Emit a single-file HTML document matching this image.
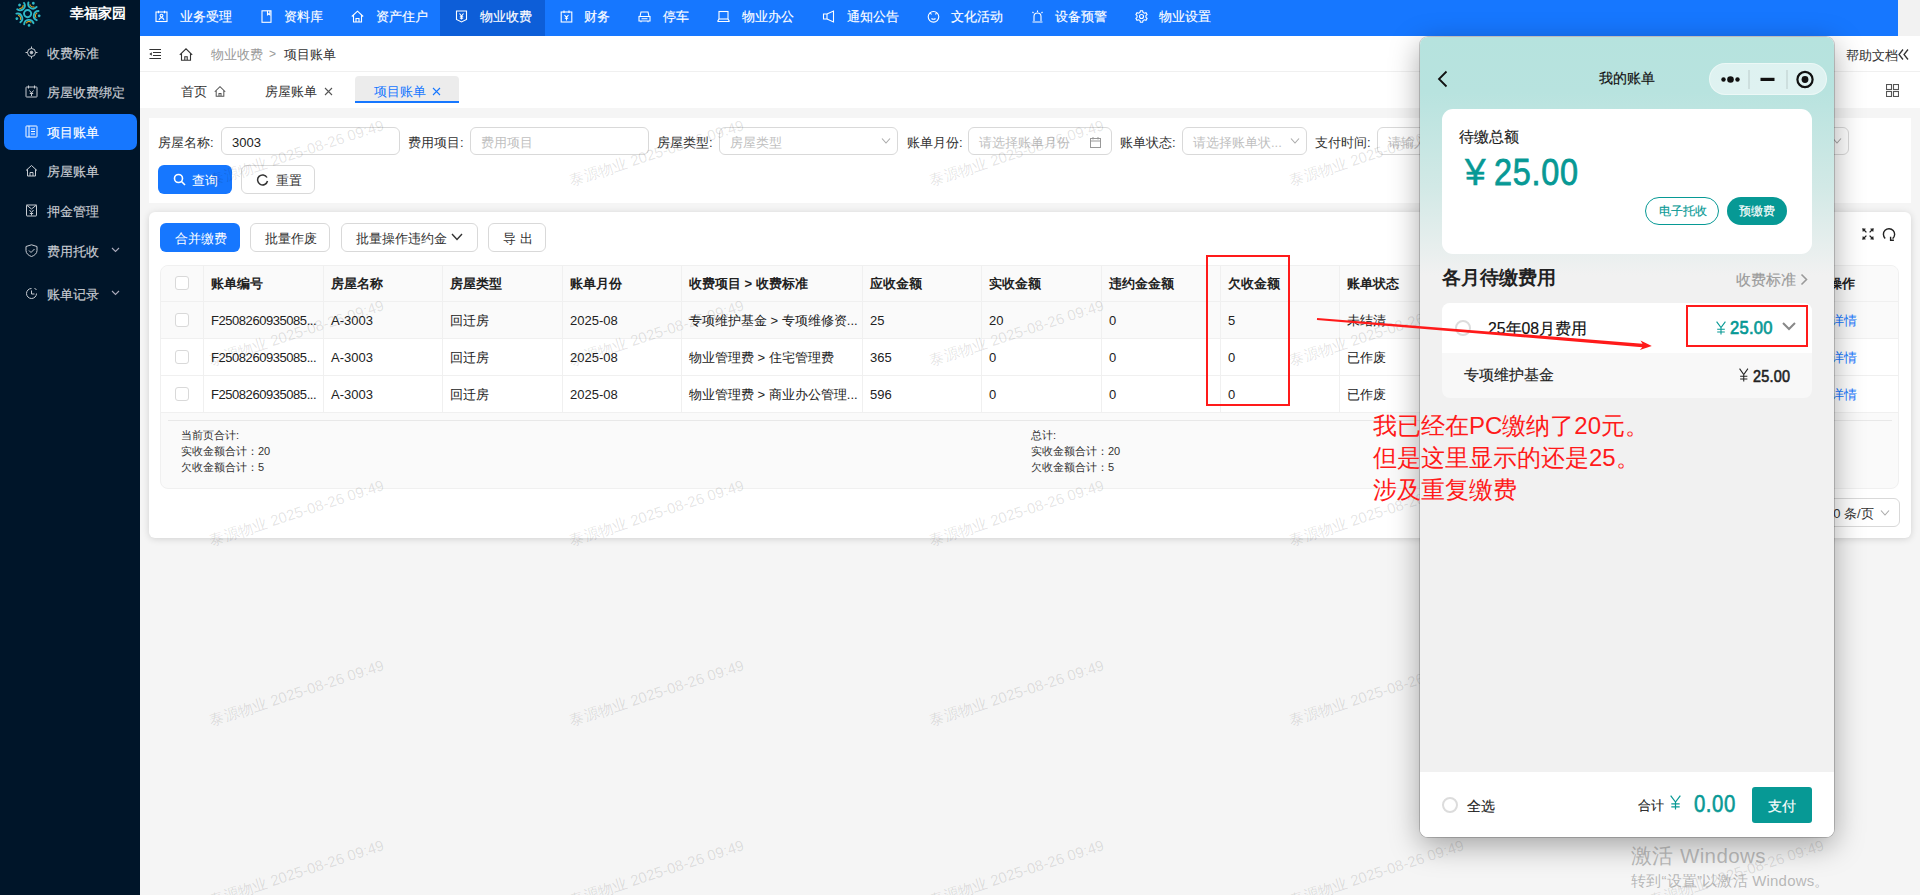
<!DOCTYPE html>
<html><head><meta charset="utf-8">
<style>
*{box-sizing:border-box;margin:0;padding:0}
html,body{width:1920px;height:895px;overflow:hidden}
body{font-family:"Liberation Sans",sans-serif;font-weight:500;background:#f5f5f5;position:relative;color:#222;font-size:13px}
.abs{position:absolute}
#crumb .t,#tabs .t,#search .t{margin-top:1px}
.t[style*="bold"],#wm .t,#tablep .t,#search .t,#crumb .t,#tabs .t{-webkit-text-stroke-width:0}
#side{left:0;top:0;width:140px;height:895px;background:#001529}
#nav{left:140px;top:0;width:1758px;height:36px;background:#1677ff}
#rstrip{left:1898px;top:0;width:22px;height:36px;background:#f2f2f2}
#crumb{left:140px;top:36px;width:1780px;height:36px;background:#fff;border-bottom:1px solid #f0f0f0}
#tabs{left:140px;top:72px;width:1780px;height:36px;background:#fff}
#search{left:149px;top:118px;width:1762px;height:85px;background:#fff}
#tablep{left:149px;top:212px;width:1762px;height:326px;background:#fff;border-radius:6px;box-shadow:0 1px 7px rgba(0,0,0,.15)}
.t{position:absolute;white-space:nowrap;line-height:1;font-weight:500;-webkit-text-stroke-width:0.15px}
.nav-i{position:absolute;top:0;height:36px;color:#fff;font-size:13px;line-height:36px}
.side-i{position:absolute;left:0;width:140px;color:#d0d4da;font-size:13px}
</style></head><body>
<div id="side" class="abs">
<svg class="abs" style="left:0;top:0" width="56" height="30" viewBox="0 0 56 30"><g transform="translate(27.6,13.6)"><circle cx="0" cy="0" r="3.6" stroke="#2fb8c6" stroke-width="1.9" fill="none"/><g transform="rotate(11)"><path d="M10.2 -4.7 A4.8 4.8 0 0 0 10.2 4.7" stroke="#2fb8c6" stroke-width="1.9" stroke-linecap="round" fill="none"/><path d="M9.3 -2.6 A3.3 3.3 0 0 0 9.3 2.6" stroke="#e6a91c" stroke-width="1.0" fill="none"/><circle cx="11.8" cy="0" r="1.4" fill="#2fb8c6"/></g><g transform="rotate(83)"><path d="M10.2 -4.7 A4.8 4.8 0 0 0 10.2 4.7" stroke="#2fb8c6" stroke-width="1.9" stroke-linecap="round" fill="none"/><path d="M9.3 -2.6 A3.3 3.3 0 0 0 9.3 2.6" stroke="#e6a91c" stroke-width="1.0" fill="none"/><circle cx="11.8" cy="0" r="1.4" fill="#2fb8c6"/></g><g transform="rotate(155)"><path d="M10.2 -4.7 A4.8 4.8 0 0 0 10.2 4.7" stroke="#2fb8c6" stroke-width="1.9" stroke-linecap="round" fill="none"/><path d="M9.3 -2.6 A3.3 3.3 0 0 0 9.3 2.6" stroke="#e6a91c" stroke-width="1.0" fill="none"/><circle cx="11.8" cy="0" r="1.4" fill="#2fb8c6"/></g><g transform="rotate(227)"><path d="M10.2 -4.7 A4.8 4.8 0 0 0 10.2 4.7" stroke="#2fb8c6" stroke-width="1.9" stroke-linecap="round" fill="none"/><path d="M9.3 -2.6 A3.3 3.3 0 0 0 9.3 2.6" stroke="#e6a91c" stroke-width="1.0" fill="none"/><circle cx="11.8" cy="0" r="1.4" fill="#2fb8c6"/></g><g transform="rotate(299)"><path d="M10.2 -4.7 A4.8 4.8 0 0 0 10.2 4.7" stroke="#2fb8c6" stroke-width="1.9" stroke-linecap="round" fill="none"/><path d="M9.3 -2.6 A3.3 3.3 0 0 0 9.3 2.6" stroke="#e6a91c" stroke-width="1.0" fill="none"/><circle cx="11.8" cy="0" r="1.4" fill="#2fb8c6"/></g></g></svg>
<div class="t" style="left:70px;top:6px;color:#fff;font-size:14px;font-weight:bold">幸福家园</div>
<div class="abs" style="left:4px;top:114px;width:133px;height:36px;background:#1677ff;border-radius:7px"></div>
<svg class="abs" style="left:25px;top:46px;color:#c8ccd2" width="13" height="13" viewBox="0 0 13 13" fill="none" stroke="currentColor" stroke-width="1"><circle cx="6.5" cy="6.5" r="4" /><circle cx="6.5" cy="6.5" r="1.3" fill="currentColor"/><path d="M6.5 0.5v2M6.5 10.5v2M0.5 6.5h2M10.5 6.5h2"/></svg><div class="t" style="left:47px;top:47px;color:#c8ccd2;font-size:13px">收费标准</div><svg class="abs" style="left:25px;top:85px;color:#c8ccd2" width="13" height="13" viewBox="0 0 13 13" fill="none" stroke="currentColor" stroke-width="1"><rect x="1" y="2" width="11" height="10" rx="0.5"/><path d="M3.5 0.5v3M9.5 0.5v3M4.5 5.5l2 2.5 2-2.5M6.5 8v3M4.8 8.5h3.4"/></svg><div class="t" style="left:47px;top:86px;color:#c8ccd2;font-size:13px">房屋收费绑定</div><svg class="abs" style="left:25px;top:125px;color:#fff" width="13" height="13" viewBox="0 0 13 13" fill="none" stroke="currentColor" stroke-width="1"><rect x="1" y="1" width="11" height="11" rx="0.5"/><path d="M4 1v11M6 4h4M6 6.5h4M6 9h4"/></svg><div class="t" style="left:47px;top:126px;color:#fff;font-size:13px">项目账单</div><svg class="abs" style="left:25px;top:164px;color:#c8ccd2" width="13" height="13" viewBox="0 0 13 13" fill="none" stroke="currentColor" stroke-width="1"><path d="M1 6.5L6.5 1.5 12 6.5M2.5 5.2V12h8V5.2M5 12V8.5h3V12"/></svg><div class="t" style="left:47px;top:165px;color:#c8ccd2;font-size:13px">房屋账单</div><svg class="abs" style="left:25px;top:204px;color:#c8ccd2" width="13" height="13" viewBox="0 0 13 13" fill="none" stroke="currentColor" stroke-width="1"><rect x="1.5" y="1" width="10" height="11" rx="0.5"/><path d="M1.5 1l5 4 5-4M4.5 6l2 2.5 2-2.5M6.5 8.5v3M4.8 9.5h3.4"/></svg><div class="t" style="left:47px;top:205px;color:#c8ccd2;font-size:13px">押金管理</div><svg class="abs" style="left:25px;top:244px;color:#c8ccd2" width="13" height="13" viewBox="0 0 13 13" fill="none" stroke="currentColor" stroke-width="1"><path d="M6.5 0.8L12 2.5v4C12 9.5 9.5 11.5 6.5 12.5 3.5 11.5 1 9.5 1 6.5v-4z"/><path d="M4 6.5l2 2 3.5-3.5"/></svg><div class="t" style="left:47px;top:245px;color:#c8ccd2;font-size:13px">费用托收</div><svg class="abs" style="left:111px;top:247px" width="9" height="6" viewBox="0 0 9 6" fill="none" stroke="#aab" stroke-width="1.1"><path d="M1 1l3.5 3.5L8 1"/></svg><svg class="abs" style="left:25px;top:287px;color:#c8ccd2" width="13" height="13" viewBox="0 0 13 13" fill="none" stroke="currentColor" stroke-width="1"><path d="M11.5 6.5A5 5 0 1 1 6.5 1.5"/><path d="M6.5 3.5v3.5h3M9.5 1.5l2 1"/></svg><div class="t" style="left:47px;top:288px;color:#c8ccd2;font-size:13px">账单记录</div><svg class="abs" style="left:111px;top:290px" width="9" height="6" viewBox="0 0 9 6" fill="none" stroke="#aab" stroke-width="1.1"><path d="M1 1l3.5 3.5L8 1"/></svg></div>
<div id="nav" class="abs"><div class="abs" style="left:300px;top:0;width:105px;height:36px;background:#0d5ed8"></div><svg class="abs" style="left:15px;top:10px" width="13" height="13" viewBox="0 0 13 13" fill="none" stroke="#fff" stroke-width="1.1"><rect x="1" y="2" width="11" height="9.5"/><path d="M3.5 0.8v2.4M9.5 0.8v2.4"/><circle cx="6.5" cy="5.6" r="1.4"/><path d="M4 9.8c0.5-1.5 1.3-2.2 2.5-2.2s2 0.7 2.5 2.2"/></svg><div class="t" style="left:40px;top:10px;color:#fff;font-size:13px">业务受理</div><svg class="abs" style="left:120px;top:10px" width="13" height="13" viewBox="0 0 13 13" fill="none" stroke="#fff" stroke-width="1.1"><rect x="2" y="0.8" width="9" height="11.5"/><path d="M7.5 0.8v4l1.2-1 1.2 1v-4"/></svg><div class="t" style="left:144px;top:10px;color:#fff;font-size:13px">资料库</div><svg class="abs" style="left:211px;top:10px" width="13" height="13" viewBox="0 0 13 13" fill="none" stroke="#fff" stroke-width="1.1"><path d="M0.8 6.5L6.5 1.2 12.2 6.5M2.5 5V12h8V5M5 12V8.5h3V12"/></svg><div class="t" style="left:236px;top:10px;color:#fff;font-size:13px">资产住户</div><svg class="abs" style="left:315px;top:10px" width="13" height="13" viewBox="0 0 13 13" fill="none" stroke="#fff" stroke-width="1.1"><path d="M1.5 1h10v8.5L6.5 12 1.5 9.5z"/><path d="M4.5 3.5l2 2.5 2-2.5M6.5 6v3.5M4.8 6.8h3.4M4.8 8.3h3.4"/></svg><div class="t" style="left:340px;top:10px;color:#fff;font-size:13px">物业收费</div><svg class="abs" style="left:420px;top:10px" width="13" height="13" viewBox="0 0 13 13" fill="none" stroke="#fff" stroke-width="1.1"><rect x="1.2" y="2" width="10.6" height="10"/><path d="M4 0.5v2.5M9 0.5v2.5M4.5 5l2 2.3 2-2.3M6.5 7.3v3.2M4.8 8.3h3.4"/></svg><div class="t" style="left:444px;top:10px;color:#fff;font-size:13px">财务</div><svg class="abs" style="left:498px;top:10px" width="13" height="13" viewBox="0 0 13 13" fill="none" stroke="#fff" stroke-width="1.1"><path d="M2 6.5l1-4.5h7l1 4.5M1 6.5h11v4.5H1zM3 11v1.2M10 11v1.2M3.5 8.8h6"/></svg><div class="t" style="left:523px;top:10px;color:#fff;font-size:13px">停车</div><svg class="abs" style="left:577px;top:10px" width="13" height="13" viewBox="0 0 13 13" fill="none" stroke="#fff" stroke-width="1.1"><rect x="2" y="1.5" width="9" height="7.5"/><path d="M0.5 11.5h12M2 9l-1.5 2.5M11 9l1.5 2.5"/></svg><div class="t" style="left:602px;top:10px;color:#fff;font-size:13px">物业办公</div><svg class="abs" style="left:682px;top:10px" width="13" height="13" viewBox="0 0 13 13" fill="none" stroke="#fff" stroke-width="1.1"><path d="M11.5 1v11L5 9H1.5V4H5z"/><path d="M5 4v5"/></svg><div class="t" style="left:707px;top:10px;color:#fff;font-size:13px">通知公告</div><svg class="abs" style="left:787px;top:10px" width="13" height="13" viewBox="0 0 13 13" fill="none" stroke="#fff" stroke-width="1.1"><circle cx="6.5" cy="6.8" r="5.3"/><path d="M3 2.5l1.5 2M9.5 2.5L8.5 4.5M4.5 8.5c1 1 3 1 4 0"/></svg><div class="t" style="left:811px;top:10px;color:#fff;font-size:13px">文化活动</div><svg class="abs" style="left:891px;top:10px" width="13" height="13" viewBox="0 0 13 13" fill="none" stroke="#fff" stroke-width="1.1"><path d="M3 11V6.5a3.5 3.5 0 0 1 7 0V11M1.5 12h10M6.5 0.5v1.5M1.5 2l1 1M11.5 2l-1 1"/></svg><div class="t" style="left:915px;top:10px;color:#fff;font-size:13px">设备预警</div><svg class="abs" style="left:995px;top:10px" width="13" height="13" viewBox="0 0 13 13" fill="none" stroke="#fff" stroke-width="1.1"><circle cx="6.5" cy="6.5" r="2"/><path d="M5.4 0.8h2.2l0.4 1.6 1.4 0.8 1.6-0.5 1.1 1.9-1.2 1.1v1.6l1.2 1.1-1.1 1.9-1.6-0.5-1.4 0.8-0.4 1.6H5.4L5 10.6l-1.4-0.8-1.6 0.5L0.9 8.4l1.2-1.1V5.7L0.9 4.6 2 2.7l1.6 0.5L5 2.4z"/></svg><div class="t" style="left:1019px;top:10px;color:#fff;font-size:13px">物业设置</div></div>
<div id="rstrip" class="abs"></div>
<div id="crumb" class="abs">
<svg class="abs" style="left:9px;top:12px" width="13" height="11" viewBox="0 0 13 11"><g stroke="#333" stroke-width="1" fill="none"><path d="M0.4 1.5h11.6M4 4.5h8M4 7.5h8M0.4 10.5h11.6"/></g><path d="M0.4 6L2.8 4.2V7.8z" fill="#333"/></svg>
<svg class="abs" style="left:39px;top:12px" width="14" height="13" viewBox="0 0 14 13" fill="none" stroke="#333" stroke-width="1.1"><path d="M0.8 6.8L7 0.8 13.2 6.8M2.5 5.2V12.2h9V5.2M5.8 12.2V8.8h2.4V12.2"/></svg>
<div class="t" style="left:71px;top:11px;color:#999;font-size:13px">物业收费</div>
<div class="t" style="left:129px;top:11px;color:#999;font-size:12px">&gt;</div>
<div class="t" style="left:144px;top:11px;color:#333;font-size:13px">项目账单</div>
<div class="t" style="left:1706px;top:12px;color:#333;font-size:13px">帮助文档</div>
<svg class="abs" style="left:1757px;top:12px" width="13" height="13" viewBox="0 0 13 13" fill="none" stroke="#333" stroke-width="1.3"><path d="M6 1.5L2 6.5 6 11.5M11 1.5L7 6.5 11 11.5"/></svg>
</div>
<div id="tabs" class="abs">
<div class="t" style="left:41px;top:12px;color:#333;font-size:13px">首页</div>
<svg class="abs" style="left:74px;top:13.5px" width="12" height="11" viewBox="0 0 14 13" fill="none" stroke="#555" stroke-width="1.2"><path d="M0.8 6.8L7 0.8 13.2 6.8M2.5 5.2V12.2h9V5.2M5.8 12.2V8.8h2.4V12.2"/></svg>
<div class="t" style="left:125px;top:12px;color:#333;font-size:13px">房屋账单</div>
<svg class="abs" style="left:184px;top:15px" width="9" height="9" viewBox="0 0 9 9" stroke="#555" stroke-width="1.1"><path d="M1 1l7 7M8 1L1 8"/></svg>
<div class="abs" style="left:215px;top:4px;width:104px;height:27px;background:#ececec;border-radius:4px 4px 0 0;border-bottom:2px solid #1677ff"></div>
<div class="t" style="left:234px;top:12px;color:#1677ff;font-size:13px">项目账单</div>
<svg class="abs" style="left:292px;top:15px" width="9" height="9" viewBox="0 0 9 9" stroke="#1677ff" stroke-width="1.1"><path d="M1 1l7 7M8 1L1 8"/></svg>
<svg class="abs" style="left:1746px;top:12px" width="13" height="13" viewBox="0 0 13 13" fill="none" stroke="#555" stroke-width="1.1"><rect x="0.5" y="0.5" width="5" height="5"/><rect x="7.5" y="0.5" width="5" height="5"/><rect x="0.5" y="7.5" width="5" height="5"/><rect x="7.5" y="7.5" width="5" height="5"/></svg>
</div>
<div id="search" class="abs"><div class="t" style="left:9px;top:17px;color:#333;font-size:13px">房屋名称:</div><div class="abs" style="left:72px;top:9px;width:179px;height:28px;border:1px solid #d9d9d9;border-radius:6px;background:#fff"></div><div class="t" style="left:83px;top:17px;color:#222;font-size:13px">3003</div><div class="t" style="left:259px;top:17px;color:#333;font-size:13px">费用项目:</div><div class="abs" style="left:321px;top:9px;width:179px;height:28px;border:1px solid #d9d9d9;border-radius:6px;background:#fff"></div><div class="t" style="left:332px;top:17px;color:#bfbfbf;font-size:13px">费用项目</div><div class="t" style="left:508px;top:17px;color:#333;font-size:13px">房屋类型:</div><div class="abs" style="left:570px;top:9px;width:179px;height:28px;border:1px solid #d9d9d9;border-radius:6px;background:#fff"></div><div class="t" style="left:581px;top:17px;color:#bfbfbf;font-size:13px">房屋类型</div><svg class="abs" style="left:732px;top:20px" width="10" height="6" viewBox="0 0 10 6" fill="none" stroke="#aaa" stroke-width="1.1"><path d="M1 0.5l4 4.5 4-4.5"/></svg><div class="t" style="left:758px;top:17px;color:#333;font-size:13px">账单月份:</div><div class="abs" style="left:819px;top:9px;width:144px;height:28px;border:1px solid #d9d9d9;border-radius:6px;background:#fff"></div><div class="t" style="left:830px;top:17px;color:#bfbfbf;font-size:13px">请选择账单月份</div><svg class="abs" style="left:940px;top:19px" width="13" height="11" viewBox="0 0 13 11" fill="none" stroke="#999" stroke-width="1"><rect x="1.5" y="1.5" width="10" height="9"/><path d="M1.5 4h10M4 0v2.5M9 0v2.5"/></svg><div class="t" style="left:971px;top:17px;color:#333;font-size:13px">账单状态:</div><div class="abs" style="left:1033px;top:9px;width:125px;height:28px;border:1px solid #d9d9d9;border-radius:6px;background:#fff"></div><div class="t" style="left:1044px;top:17px;color:#bfbfbf;font-size:13px">请选择账单状...</div><svg class="abs" style="left:1141px;top:20px" width="10" height="6" viewBox="0 0 10 6" fill="none" stroke="#aaa" stroke-width="1.1"><path d="M1 0.5l4 4.5 4-4.5"/></svg><div class="t" style="left:1166px;top:17px;color:#333;font-size:13px">支付时间:</div><div class="abs" style="left:1228px;top:9px;width:179px;height:28px;border:1px solid #d9d9d9;border-radius:6px;background:#fff"></div><div class="t" style="left:1239px;top:17px;color:#bfbfbf;font-size:13px">请输入</div><div class="abs" style="left:1521px;top:9px;width:179px;height:28px;border:1px solid #d9d9d9;border-radius:6px;background:#fff"></div><div class="t" style="left:1532px;top:17px;color:#bfbfbf;font-size:13px"></div><svg class="abs" style="left:1683px;top:20px" width="10" height="6" viewBox="0 0 10 6" fill="none" stroke="#aaa" stroke-width="1.1"><path d="M1 0.5l4 4.5 4-4.5"/></svg><div class="abs" style="left:9px;top:47px;width:74px;height:29px;background:#1677ff;border-radius:6px"></div>
<svg class="abs" style="left:24px;top:55px" width="13" height="13" viewBox="0 0 13 13" fill="none" stroke="#fff" stroke-width="1.6"><circle cx="5.5" cy="5.5" r="4"/><path d="M8.5 8.5l3.5 3.5"/></svg>
<div class="t" style="left:43px;top:55px;color:#fff;font-size:13px">查询</div>
<div class="abs" style="left:92px;top:47px;width:74px;height:29px;border:1px solid #d9d9d9;border-radius:6px;background:#fff"></div>
<svg class="abs" style="left:107px;top:55px" width="13" height="13" viewBox="0 0 13 13" fill="none" stroke="#333" stroke-width="1.5"><path d="M11 4.5A5 5 0 1 0 11.5 8"/></svg>
<div class="t" style="left:127px;top:55px;color:#333;font-size:13px">重置</div>
</div>
<div id="tablep" class="abs"><div class="abs" style="left:11px;top:11px;width:80px;height:29px;background:#1677ff;border-radius:6px"></div><div class="t" style="left:26px;top:20px;color:#fff;font-size:13px">合并缴费</div><div class="abs" style="left:101px;top:11px;width:80px;height:29px;border:1px solid #d9d9d9;border-radius:6px;background:#fff"></div><div class="t" style="left:116px;top:20px;color:#333;font-size:13px">批量作废</div><div class="abs" style="left:192px;top:11px;width:137px;height:29px;border:1px solid #d9d9d9;border-radius:6px;background:#fff"></div><div class="t" style="left:207px;top:20px;color:#333;font-size:13px">批量操作违约金</div><svg class="abs" style="left:302px;top:21px" width="12" height="8" viewBox="0 0 12 8" fill="none" stroke="#333" stroke-width="1.4"><path d="M1 1l5 5.5L11 1"/></svg><div class="abs" style="left:339px;top:11px;width:58px;height:29px;border:1px solid #d9d9d9;border-radius:6px;background:#fff"></div><div class="t" style="left:354px;top:20px;color:#333;font-size:13px">导&nbsp;出</div><svg class="abs" style="left:1713px;top:16px" width="12" height="12" viewBox="0 0 12 12"><g stroke="#222" stroke-width="1.3" fill="none"><path d="M4.4 4.4L2 2M7.6 4.4L10 2M4.4 7.6L2 10M7.6 7.6L10 10"/></g><g fill="#222"><path d="M0.2 0.2L4 0.8 0.8 4z"/><path d="M11.8 0.2L8 0.8 11.2 4z"/><path d="M0.2 11.8L0.8 8 4 11.2z"/><path d="M11.8 11.8L11.2 8 8 11.2z"/></g></svg><svg class="abs" style="left:1733px;top:16px" width="15" height="14" viewBox="0 0 15 14" fill="none" stroke="#222" stroke-width="1.4"><path d="M3.2 10.4A5.6 5.6 0 1 1 10.6 10.6"/><path d="M8.6 8.8V12.2H11.9"/></svg><div class="abs" style="left:11px;top:53px;width:1739px;height:224px;border:1px solid #f0f0f0;border-radius:8px;background:#fafafa;overflow:hidden"><div class="abs" style="left:0;top:0;width:100%;height:36px;background:#fafafa;border-bottom:1px solid #f0f0f0"></div><div class="abs" style="left:0;top:36px;width:100%;height:37px;background:#fafafa;border-bottom:1px solid #f0f0f0"></div><div class="abs" style="left:0;top:73px;width:100%;height:37px;background:#fff;border-bottom:1px solid #f0f0f0"></div><div class="abs" style="left:0;top:110px;width:100%;height:37px;background:#fff;border-bottom:1px solid #f0f0f0"></div><div class="abs" style="left:42px;top:0;width:1px;height:147px;background:#f0f0f0"></div><div class="abs" style="left:162px;top:0;width:1px;height:147px;background:#f0f0f0"></div><div class="abs" style="left:281px;top:0;width:1px;height:147px;background:#f0f0f0"></div><div class="abs" style="left:401px;top:0;width:1px;height:147px;background:#f0f0f0"></div><div class="abs" style="left:520px;top:0;width:1px;height:147px;background:#f0f0f0"></div><div class="abs" style="left:701px;top:0;width:1px;height:147px;background:#f0f0f0"></div><div class="abs" style="left:820px;top:0;width:1px;height:147px;background:#f0f0f0"></div><div class="abs" style="left:940px;top:0;width:1px;height:147px;background:#f0f0f0"></div><div class="abs" style="left:1059px;top:0;width:1px;height:147px;background:#f0f0f0"></div><div class="abs" style="left:1178px;top:0;width:1px;height:147px;background:#f0f0f0"></div><div class="abs" style="left:1298px;top:0;width:1px;height:147px;background:#f0f0f0"></div><div class="abs" style="left:1417px;top:0;width:1px;height:147px;background:#f0f0f0"></div><div class="abs" style="left:1537px;top:0;width:1px;height:147px;background:#f0f0f0"></div><div class="abs" style="left:1657px;top:0;width:1px;height:147px;background:#f0f0f0"></div><div class="abs" style="left:14px;top:10px;width:14px;height:14px;border:1px solid #d9d9d9;border-radius:3px;background:#fff"></div><div class="abs" style="left:14px;top:47px;width:14px;height:14px;border:1px solid #d9d9d9;border-radius:3px;background:#fff"></div><div class="abs" style="left:14px;top:84px;width:14px;height:14px;border:1px solid #d9d9d9;border-radius:3px;background:#fff"></div><div class="abs" style="left:14px;top:121px;width:14px;height:14px;border:1px solid #d9d9d9;border-radius:3px;background:#fff"></div><div class="t" style="left:50px;top:11px;color:#222;font-size:13px;font-weight:bold">账单编号</div><div class="t" style="left:170px;top:11px;color:#222;font-size:13px;font-weight:bold">房屋名称</div><div class="t" style="left:289px;top:11px;color:#222;font-size:13px;font-weight:bold">房屋类型</div><div class="t" style="left:409px;top:11px;color:#222;font-size:13px;font-weight:bold">账单月份</div><div class="t" style="left:528px;top:11px;color:#222;font-size:13px;font-weight:bold">收费项目 &gt; 收费标准</div><div class="t" style="left:709px;top:11px;color:#222;font-size:13px;font-weight:bold">应收金额</div><div class="t" style="left:828px;top:11px;color:#222;font-size:13px;font-weight:bold">实收金额</div><div class="t" style="left:948px;top:11px;color:#222;font-size:13px;font-weight:bold">违约金金额</div><div class="t" style="left:1067px;top:11px;color:#222;font-size:13px;font-weight:bold">欠收金额</div><div class="t" style="left:1186px;top:11px;color:#222;font-size:13px;font-weight:bold">账单状态</div><div class="t" style="left:1668px;top:11px;color:#222;font-size:13px;font-weight:bold">操作</div><div class="t" style="left:50px;top:48px;color:#222;font-size:13px;letter-spacing:-0.45px">F2508260935085...</div><div class="t" style="left:170px;top:48px;color:#222;font-size:13px">A-3003</div><div class="t" style="left:289px;top:48px;color:#222;font-size:13px">回迁房</div><div class="t" style="left:409px;top:48px;color:#222;font-size:13px">2025-08</div><div class="t" style="left:528px;top:48px;color:#222;font-size:13px">专项维护基金 &gt; 专项维修资...</div><div class="t" style="left:709px;top:48px;color:#222;font-size:13px">25</div><div class="t" style="left:828px;top:48px;color:#222;font-size:13px">20</div><div class="t" style="left:948px;top:48px;color:#222;font-size:13px">0</div><div class="t" style="left:1067px;top:48px;color:#222;font-size:13px">5</div><div class="t" style="left:1186px;top:48px;color:#222;font-size:13px">未结清</div><div class="t" style="left:1670px;top:48px;color:#1677ff;font-size:13px">详情</div><div class="t" style="left:50px;top:85px;color:#222;font-size:13px;letter-spacing:-0.45px">F2508260935085...</div><div class="t" style="left:170px;top:85px;color:#222;font-size:13px">A-3003</div><div class="t" style="left:289px;top:85px;color:#222;font-size:13px">回迁房</div><div class="t" style="left:409px;top:85px;color:#222;font-size:13px">2025-08</div><div class="t" style="left:528px;top:85px;color:#222;font-size:13px">物业管理费 &gt; 住宅管理费</div><div class="t" style="left:709px;top:85px;color:#222;font-size:13px">365</div><div class="t" style="left:828px;top:85px;color:#222;font-size:13px">0</div><div class="t" style="left:948px;top:85px;color:#222;font-size:13px">0</div><div class="t" style="left:1067px;top:85px;color:#222;font-size:13px">0</div><div class="t" style="left:1186px;top:85px;color:#222;font-size:13px">已作废</div><div class="t" style="left:1670px;top:85px;color:#1677ff;font-size:13px">详情</div><div class="t" style="left:50px;top:122px;color:#222;font-size:13px;letter-spacing:-0.45px">F2508260935085...</div><div class="t" style="left:170px;top:122px;color:#222;font-size:13px">A-3003</div><div class="t" style="left:289px;top:122px;color:#222;font-size:13px">回迁房</div><div class="t" style="left:409px;top:122px;color:#222;font-size:13px">2025-08</div><div class="t" style="left:528px;top:122px;color:#222;font-size:13px">物业管理费 &gt; 商业办公管理...</div><div class="t" style="left:709px;top:122px;color:#222;font-size:13px">596</div><div class="t" style="left:828px;top:122px;color:#222;font-size:13px">0</div><div class="t" style="left:948px;top:122px;color:#222;font-size:13px">0</div><div class="t" style="left:1067px;top:122px;color:#222;font-size:13px">0</div><div class="t" style="left:1186px;top:122px;color:#222;font-size:13px">已作废</div><div class="t" style="left:1670px;top:122px;color:#1677ff;font-size:13px">详情</div><div class="abs" style="left:7px;top:154px;width:1724px;height:1px;background:#e8e8e8"></div><div class="t" style="left:20px;top:164px;color:#333;font-size:11px">当前页合计:</div><div class="t" style="left:20px;top:180px;color:#333;font-size:11px">实收金额合计：20</div><div class="t" style="left:20px;top:196px;color:#333;font-size:11px">欠收金额合计：5</div><div class="t" style="left:870px;top:164px;color:#333;font-size:11px">总计:</div><div class="t" style="left:870px;top:180px;color:#333;font-size:11px">实收金额合计：20</div><div class="t" style="left:870px;top:196px;color:#333;font-size:11px">欠收金额合计：5</div></div><div class="abs" style="left:1641px;top:286px;width:110px;height:29px;border:1px solid #d9d9d9;border-radius:6px;background:#fff"></div><div class="t" style="left:1677px;top:295px;color:#333;font-size:13px">10 条/页</div><svg class="abs" style="left:1731px;top:298px" width="10" height="6" viewBox="0 0 10 6" fill="none" stroke="#aaa" stroke-width="1.1"><path d="M1 0.5l4 4.5 4-4.5"/></svg></div>
<div id="wm" class="abs" style="left:140px;top:36px;width:1780px;height:859px;overflow:hidden;pointer-events:none"><div class="t" style="left:72px;top:-43px;font-size:15px;line-height:15px;color:rgba(0,0,0,.115);transform:rotate(-18deg);transform-origin:0 100%">泰源物业 2025-08-26 09:49</div><div class="t" style="left:432px;top:-43px;font-size:15px;line-height:15px;color:rgba(0,0,0,.115);transform:rotate(-18deg);transform-origin:0 100%">泰源物业 2025-08-26 09:49</div><div class="t" style="left:792px;top:-43px;font-size:15px;line-height:15px;color:rgba(0,0,0,.115);transform:rotate(-18deg);transform-origin:0 100%">泰源物业 2025-08-26 09:49</div><div class="t" style="left:1152px;top:-43px;font-size:15px;line-height:15px;color:rgba(0,0,0,.115);transform:rotate(-18deg);transform-origin:0 100%">泰源物业 2025-08-26 09:49</div><div class="t" style="left:1512px;top:-43px;font-size:15px;line-height:15px;color:rgba(0,0,0,.115);transform:rotate(-18deg);transform-origin:0 100%">泰源物业 2025-08-26 09:49</div><div class="t" style="left:1872px;top:-43px;font-size:15px;line-height:15px;color:rgba(0,0,0,.115);transform:rotate(-18deg);transform-origin:0 100%">泰源物业 2025-08-26 09:49</div><div class="t" style="left:72px;top:137px;font-size:15px;line-height:15px;color:rgba(0,0,0,.115);transform:rotate(-18deg);transform-origin:0 100%">泰源物业 2025-08-26 09:49</div><div class="t" style="left:432px;top:137px;font-size:15px;line-height:15px;color:rgba(0,0,0,.115);transform:rotate(-18deg);transform-origin:0 100%">泰源物业 2025-08-26 09:49</div><div class="t" style="left:792px;top:137px;font-size:15px;line-height:15px;color:rgba(0,0,0,.115);transform:rotate(-18deg);transform-origin:0 100%">泰源物业 2025-08-26 09:49</div><div class="t" style="left:1152px;top:137px;font-size:15px;line-height:15px;color:rgba(0,0,0,.115);transform:rotate(-18deg);transform-origin:0 100%">泰源物业 2025-08-26 09:49</div><div class="t" style="left:1512px;top:137px;font-size:15px;line-height:15px;color:rgba(0,0,0,.115);transform:rotate(-18deg);transform-origin:0 100%">泰源物业 2025-08-26 09:49</div><div class="t" style="left:1872px;top:137px;font-size:15px;line-height:15px;color:rgba(0,0,0,.115);transform:rotate(-18deg);transform-origin:0 100%">泰源物业 2025-08-26 09:49</div><div class="t" style="left:72px;top:317px;font-size:15px;line-height:15px;color:rgba(0,0,0,.115);transform:rotate(-18deg);transform-origin:0 100%">泰源物业 2025-08-26 09:49</div><div class="t" style="left:432px;top:317px;font-size:15px;line-height:15px;color:rgba(0,0,0,.115);transform:rotate(-18deg);transform-origin:0 100%">泰源物业 2025-08-26 09:49</div><div class="t" style="left:792px;top:317px;font-size:15px;line-height:15px;color:rgba(0,0,0,.115);transform:rotate(-18deg);transform-origin:0 100%">泰源物业 2025-08-26 09:49</div><div class="t" style="left:1152px;top:317px;font-size:15px;line-height:15px;color:rgba(0,0,0,.115);transform:rotate(-18deg);transform-origin:0 100%">泰源物业 2025-08-26 09:49</div><div class="t" style="left:1512px;top:317px;font-size:15px;line-height:15px;color:rgba(0,0,0,.115);transform:rotate(-18deg);transform-origin:0 100%">泰源物业 2025-08-26 09:49</div><div class="t" style="left:1872px;top:317px;font-size:15px;line-height:15px;color:rgba(0,0,0,.115);transform:rotate(-18deg);transform-origin:0 100%">泰源物业 2025-08-26 09:49</div><div class="t" style="left:72px;top:497px;font-size:15px;line-height:15px;color:rgba(0,0,0,.115);transform:rotate(-18deg);transform-origin:0 100%">泰源物业 2025-08-26 09:49</div><div class="t" style="left:432px;top:497px;font-size:15px;line-height:15px;color:rgba(0,0,0,.115);transform:rotate(-18deg);transform-origin:0 100%">泰源物业 2025-08-26 09:49</div><div class="t" style="left:792px;top:497px;font-size:15px;line-height:15px;color:rgba(0,0,0,.115);transform:rotate(-18deg);transform-origin:0 100%">泰源物业 2025-08-26 09:49</div><div class="t" style="left:1152px;top:497px;font-size:15px;line-height:15px;color:rgba(0,0,0,.115);transform:rotate(-18deg);transform-origin:0 100%">泰源物业 2025-08-26 09:49</div><div class="t" style="left:1512px;top:497px;font-size:15px;line-height:15px;color:rgba(0,0,0,.115);transform:rotate(-18deg);transform-origin:0 100%">泰源物业 2025-08-26 09:49</div><div class="t" style="left:1872px;top:497px;font-size:15px;line-height:15px;color:rgba(0,0,0,.115);transform:rotate(-18deg);transform-origin:0 100%">泰源物业 2025-08-26 09:49</div><div class="t" style="left:72px;top:677px;font-size:15px;line-height:15px;color:rgba(0,0,0,.115);transform:rotate(-18deg);transform-origin:0 100%">泰源物业 2025-08-26 09:49</div><div class="t" style="left:432px;top:677px;font-size:15px;line-height:15px;color:rgba(0,0,0,.115);transform:rotate(-18deg);transform-origin:0 100%">泰源物业 2025-08-26 09:49</div><div class="t" style="left:792px;top:677px;font-size:15px;line-height:15px;color:rgba(0,0,0,.115);transform:rotate(-18deg);transform-origin:0 100%">泰源物业 2025-08-26 09:49</div><div class="t" style="left:1152px;top:677px;font-size:15px;line-height:15px;color:rgba(0,0,0,.115);transform:rotate(-18deg);transform-origin:0 100%">泰源物业 2025-08-26 09:49</div><div class="t" style="left:1512px;top:677px;font-size:15px;line-height:15px;color:rgba(0,0,0,.115);transform:rotate(-18deg);transform-origin:0 100%">泰源物业 2025-08-26 09:49</div><div class="t" style="left:1872px;top:677px;font-size:15px;line-height:15px;color:rgba(0,0,0,.115);transform:rotate(-18deg);transform-origin:0 100%">泰源物业 2025-08-26 09:49</div><div class="t" style="left:72px;top:857px;font-size:15px;line-height:15px;color:rgba(0,0,0,.115);transform:rotate(-18deg);transform-origin:0 100%">泰源物业 2025-08-26 09:49</div><div class="t" style="left:432px;top:857px;font-size:15px;line-height:15px;color:rgba(0,0,0,.115);transform:rotate(-18deg);transform-origin:0 100%">泰源物业 2025-08-26 09:49</div><div class="t" style="left:792px;top:857px;font-size:15px;line-height:15px;color:rgba(0,0,0,.115);transform:rotate(-18deg);transform-origin:0 100%">泰源物业 2025-08-26 09:49</div><div class="t" style="left:1152px;top:857px;font-size:15px;line-height:15px;color:rgba(0,0,0,.115);transform:rotate(-18deg);transform-origin:0 100%">泰源物业 2025-08-26 09:49</div><div class="t" style="left:1512px;top:857px;font-size:15px;line-height:15px;color:rgba(0,0,0,.115);transform:rotate(-18deg);transform-origin:0 100%">泰源物业 2025-08-26 09:49</div><div class="t" style="left:1872px;top:857px;font-size:15px;line-height:15px;color:rgba(0,0,0,.115);transform:rotate(-18deg);transform-origin:0 100%">泰源物业 2025-08-26 09:49</div><div class="t" style="left:72px;top:1037px;font-size:15px;line-height:15px;color:rgba(0,0,0,.115);transform:rotate(-18deg);transform-origin:0 100%">泰源物业 2025-08-26 09:49</div><div class="t" style="left:432px;top:1037px;font-size:15px;line-height:15px;color:rgba(0,0,0,.115);transform:rotate(-18deg);transform-origin:0 100%">泰源物业 2025-08-26 09:49</div><div class="t" style="left:792px;top:1037px;font-size:15px;line-height:15px;color:rgba(0,0,0,.115);transform:rotate(-18deg);transform-origin:0 100%">泰源物业 2025-08-26 09:49</div><div class="t" style="left:1152px;top:1037px;font-size:15px;line-height:15px;color:rgba(0,0,0,.115);transform:rotate(-18deg);transform-origin:0 100%">泰源物业 2025-08-26 09:49</div><div class="t" style="left:1512px;top:1037px;font-size:15px;line-height:15px;color:rgba(0,0,0,.115);transform:rotate(-18deg);transform-origin:0 100%">泰源物业 2025-08-26 09:49</div><div class="t" style="left:1872px;top:1037px;font-size:15px;line-height:15px;color:rgba(0,0,0,.115);transform:rotate(-18deg);transform-origin:0 100%">泰源物业 2025-08-26 09:49</div></div>
<div id="phone" class="abs" style="left:1420px;top:37px;width:414px;height:800px;border-radius:8px;overflow:hidden;background:linear-gradient(180deg,#b6e3de 0px,#b8e3df 55px,#d2e9e6 150px,#f1f1f1 238px,#f1f1f1 100%);box-shadow:0 8px 30px rgba(0,0,0,.35),0 0 0 1px rgba(0,0,0,.18)">
<svg class="abs" style="left:17px;top:33px" width="11" height="18" viewBox="0 0 11 18" fill="none" stroke="#111" stroke-width="1.8"><path d="M9.5 1.5L2 9l7.5 7.5"/></svg>
<div class="t" style="left:179px;top:34px;color:#111;font-size:14px">我的账单</div>
<div class="abs" style="left:289px;top:26px;width:118px;height:32px;border-radius:16px;background:rgba(255,255,255,.55);border:1px solid rgba(255,255,255,.4)"></div>
<svg class="abs" style="left:300px;top:33px" width="96" height="19" viewBox="0 0 96 19">
<circle cx="3.5" cy="9.5" r="2.2" fill="#111"/><circle cx="10.5" cy="9.5" r="3.3" fill="#111"/><circle cx="17.5" cy="9.5" r="2.2" fill="#111"/>
<rect x="28.5" y="0" width="1" height="19" fill="#bcc"/>
<rect x="40.5" y="7.8" width="14" height="3.2" fill="#111"/>
<rect x="66.5" y="0" width="1" height="19" fill="#bcc"/>
<circle cx="85" cy="9.5" r="7.6" fill="none" stroke="#111" stroke-width="2.2"/><circle cx="85" cy="9.5" r="3.4" fill="#111"/>
</svg>
<div class="abs" style="left:22px;top:72px;width:370px;height:145px;border-radius:11px;background:#fff"></div>
<div class="t" style="left:39px;top:92px;color:#222;font-size:15px">待缴总额</div>
<div class="t" style="left:45px;top:117px;color:#079995;font-size:37px;font-weight:400;-webkit-text-stroke:0.5px #079995">¥</div><div class="t" style="left:74px;top:118px;color:#079995;font-size:36px;font-weight:400;letter-spacing:0.8px;-webkit-text-stroke:0.8px #079995;transform:scaleX(0.9);transform-origin:0 0">25.00</div>
<div class="abs" style="left:225px;top:160px;width:74px;height:28px;border-radius:14px;border:1px solid #079995;background:#fff"></div>
<div class="t" style="left:239px;top:168px;color:#079995;font-size:12px">电子托收</div>
<div class="abs" style="left:307px;top:160px;width:60px;height:28px;border-radius:14px;background:#079995"></div>
<div class="t" style="left:319px;top:168px;color:#fff;font-size:12px">预缴费</div>
<div class="t" style="left:22px;top:231px;color:#222;font-size:19px;font-weight:bold">各月待缴费用</div>
<div class="t" style="left:316px;top:235px;color:#9a9a9a;font-size:15px">收费标准</div>
<svg class="abs" style="left:380px;top:236px" width="8" height="13" viewBox="0 0 8 13" fill="none" stroke="#9a9a9a" stroke-width="1.6"><path d="M1.5 1.5l5 5-5 5"/></svg>
<div class="abs" style="left:22px;top:266px;width:370px;height:95px;border-radius:8px;background:#f8f8f8;overflow:hidden"><div class="abs" style="left:0;top:0;width:370px;height:50px;background:#fff"></div></div>
<div class="abs" style="left:35px;top:283px;width:16px;height:16px;border-radius:50%;border:2px solid #dcdcdc;background:#fff"></div>
<div class="t" style="left:68px;top:284px;color:#111;font-size:15.8px">25年08月费用</div>
<svg class="abs" style="left:295.5px;top:283.5px" width="10" height="14" viewBox="0 0 10 14" preserveAspectRatio="none" fill="none" stroke="#079995" stroke-width="1.1"><path d="M0.6 0.6L5 6.6L9.4 0.6M5 6.6V13.6M1.2 8.2H8.8M1.2 11H8.8"/></svg><div class="t" style="left:310px;top:282px;color:#079995;font-size:18px;font-weight:400;letter-spacing:0.3px;-webkit-text-stroke:0.7px #079995;transform:scaleX(0.92);transform-origin:0 0">25.00</div>
<svg class="abs" style="left:362px;top:285px" width="14" height="9" viewBox="0 0 14 9" fill="none" stroke="#888" stroke-width="2"><path d="M1 1l6 6 6-6"/></svg>
<div class="t" style="left:44px;top:331px;color:#222;font-size:14.5px">专项维护基金</div>
<svg class="abs" style="left:319px;top:330.5px" width="9.5" height="14" viewBox="0 0 10 14" preserveAspectRatio="none" fill="none" stroke="#222" stroke-width="1.1"><path d="M0.6 0.6L5 6.6L9.4 0.6M5 6.6V13.6M1.2 8.2H8.8M1.2 11H8.8"/></svg><div class="t" style="left:333px;top:332px;color:#222;font-size:16px;font-weight:400;letter-spacing:0.3px;-webkit-text-stroke:0.6px #222;transform:scaleX(0.9);transform-origin:0 0">25.00</div>
<div class="abs" style="left:0;top:735px;width:414px;height:70px;background:#fff"></div>
<div class="abs" style="left:22px;top:760px;width:16px;height:16px;border-radius:50%;border:2px solid #dcdcdc;background:#fff"></div>
<div class="t" style="left:47px;top:762px;color:#222;font-size:14px">全选</div>
<div class="t" style="left:218px;top:762px;color:#222;font-size:13px">合计</div>
<svg class="abs" style="left:250px;top:757.8px" width="11" height="15" viewBox="0 0 10 14" preserveAspectRatio="none" fill="none" stroke="#079995" stroke-width="1.1"><path d="M0.6 0.6L5 6.6L9.4 0.6M5 6.6V13.6M1.2 8.2H8.8M1.2 11H8.8"/></svg>
<div class="t" style="left:274px;top:755px;color:#079995;font-size:24px;font-weight:400;letter-spacing:0.6px;-webkit-text-stroke:0.6px #079995;transform:scaleX(0.85);transform-origin:0 0">0.00</div>
<div class="abs" style="left:332px;top:750px;width:60px;height:36px;border-radius:3px;background:#079995"></div>
<div class="t" style="left:348px;top:762px;color:#fff;font-size:14px">支付</div>
</div><div class="abs" style="left:1206px;top:255px;width:84px;height:151px;border:2px solid #ff1a1a"></div>
<div class="abs" style="left:1686px;top:305px;width:122px;height:42px;border:2px solid #ff1a1a"></div>
<svg class="abs" style="left:0;top:0" width="1920" height="895"><path d="M1317.1 317.9 L1642.5 343.8 L1640.5 340.6 L1651.8 346 L1639.8 350 L1642.3 347.2 L1316.9 320.1 Z" fill="#ff1a1a"/></svg>
<div class="t" style="left:1373px;top:410px;color:#ff1a1a;font-size:24px;line-height:32px;-webkit-text-stroke-width:0">我已经在PC缴纳了20元。<br>但是这里显示的还是25。<br>涉及重复缴费</div>
<div class="t" style="left:1631px;top:846px;color:rgba(120,120,120,.5);font-size:20.5px;letter-spacing:0.4px;-webkit-text-stroke-width:0">激活 Windows</div>
<div class="t" style="left:1631px;top:873px;color:rgba(120,120,120,.5);font-size:15px;letter-spacing:0.2px;-webkit-text-stroke-width:0">转到“设置”以激活 Windows。</div>
</body></html>
